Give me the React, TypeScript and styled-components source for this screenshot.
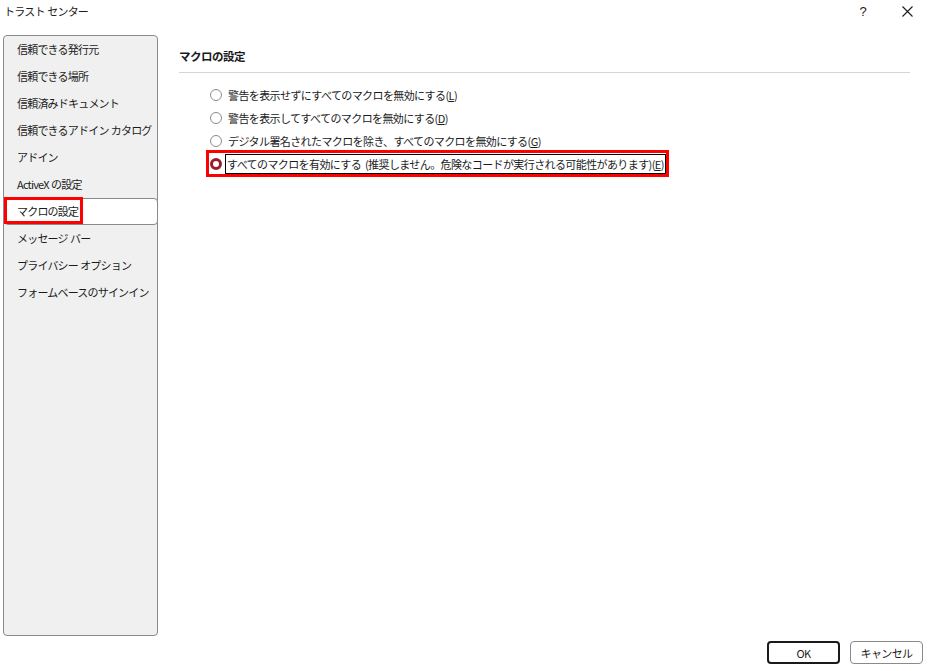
import styled, { createGlobalStyle } from 'styled-components';

const GlobalStyle = createGlobalStyle`
  html, body {
    margin: 0;
    padding: 0;
    background: #ffffff;
  }
  body {
    font-family: "Noto Sans CJK JP", "Noto Sans", sans-serif;
    font-size: 11px;
    color: #1b1b1b;
  }
`;

const Window = styled.div`
  display: flex;
  flex-direction: column;
  width: 929px;
  height: 671px;
  overflow: hidden;
`;

const TitleBar = styled.div`
  display: flex;
  align-items: flex-start;
  height: 35px;
  padding-left: 4px;
`;

const Title = styled.div`
  flex: 1;
  line-height: 22px;
  letter-spacing: -0.8px;
  word-spacing: 1px;
`;

const TitleButton = styled.div`
  width: 44px;
  height: 22px;
  display: flex;
  align-items: center;
  justify-content: center;
  font-family: "Liberation Sans", sans-serif;
  font-size: 13px;
`;

const Body = styled.div`
  flex: 1;
  display: flex;
  min-height: 0;
`;

const Sidebar = styled.ul`
  list-style: none;
  margin: 0 0 0 3px;
  padding: 0;
  width: 155px;
  background: #f0f0f0;
  border: 1px solid #8a8a8a;
  border-radius: 4px;
  box-sizing: border-box;
`;

interface IItemProps {
  selected?: boolean;
}
const Item = styled.li<IItemProps>`
  position: relative;
  height: 27px;
  display: flex;
  align-items: center;
  box-sizing: border-box;
  padding-left: ${(props) => (props.selected ? '12px' : '13px')};
  padding-bottom: 2px;
  letter-spacing: -0.8px;
  word-spacing: 0.5px;
  white-space: nowrap;
  background: ${(props) => (props.selected ? '#ffffff' : 'transparent')};
  border: ${(props) => (props.selected ? '1px solid #8a8a8a' : 'none')};
  border-radius: 4px;
  margin-right: ${(props) => (props.selected ? '-1px' : '0')};
`;

const ItemMark = styled.span`
  position: absolute;
  left: -1px;
  top: -2px;
  width: 79px;
  height: 27px;
  border: 3px solid #ff0000;
  box-sizing: border-box;
`;

const Content = styled.div`
  flex: 1;
  padding: 11px 19px 0 21px;
`;

const Heading = styled.h2`
  margin: 0;
  font-size: 11.5px;
  font-weight: 700;
  line-height: 20px;
  padding-bottom: 6px;
  border-bottom: 1px solid #d4d4d4;
  letter-spacing: -0.5px;
`;

const Options = styled.div`
  display: flex;
  flex-direction: column;
  align-items: flex-start;
  padding: 10px 0 0 29px;
`;

interface IRowProps {
  marked?: boolean;
}
const Row = styled.div<IRowProps>`
  display: flex;
  align-items: center;
  height: 23px;
  padding: 0 2px;
  gap: ${(props) => (props.marked ? '4px' : '6px')};
  outline: ${(props) => (props.marked ? '3px solid #ff0000' : 'none')};
  outline-offset: -1px;
`;

interface IRadioProps {
  checked?: boolean;
}
const Radio = styled.span<IRadioProps>`
  width: 12px;
  height: 12px;
  border-radius: 50%;
  box-sizing: border-box;
  background: #ffffff;
  border: ${(props) => (props.checked ? '3.5px solid #9b1c2c' : '1px solid #8c8c8c')};
`;

interface ILabelProps {
  focused?: boolean;
}
const Label = styled.span<ILabelProps>`
  letter-spacing: -0.6px;
  word-spacing: 2px;
  line-height: 18px;
  padding: ${(props) => (props.focused ? '0 1px' : '0')};
  outline: ${(props) => (props.focused ? '1px solid #000000' : 'none')};
  u {
    text-decoration: underline;
  }
`;

const Footer = styled.div`
  height: 35px;
  display: flex;
  justify-content: flex-end;
  align-items: flex-start;
  gap: 10px;
  padding: 5px 6px 0 0;
  box-sizing: border-box;
`;

interface IButtonProps {
  primary?: boolean;
}
const Button = styled.button<IButtonProps>`
  width: 73px;
  height: 23px;
  background: #ffffff;
  border: ${(props) => (props.primary ? '2px solid #1a1a1a' : '1px solid #8a8a8a')};
  border-radius: 4px;
  font-family: "Noto Sans CJK JP", "Noto Sans", sans-serif;
  font-size: 11px;
  color: #1b1b1b;
  letter-spacing: -0.6px;
  padding: 0;
`;

const sideItems = [
  '信頼できる発行元',
  '信頼できる場所',
  '信頼済みドキュメント',
  '信頼できるアドイン カタログ',
  'アドイン',
  'ActiveX の設定',
  'マクロの設定',
  'メッセージ バー',
  'プライバシー オプション',
  'フォームベースのサインイン',
];

const options = [
  { text: '警告を表示せずにすべてのマクロを無効にする', key: 'L' },
  { text: '警告を表示してすべてのマクロを無効にする', key: 'D' },
  { text: 'デジタル署名されたマクロを除き、すべてのマクロを無効にする', key: 'G' },
  {
    text: 'すべてのマクロを有効にする (推奨しません。危険なコードが実行される可能性があります)',
    key: 'E',
  },
];

function App() {
  return (
    <Window>
      <GlobalStyle />
      <TitleBar>
        <Title>トラスト センター</Title>
        <TitleButton>?</TitleButton>
        <TitleButton>
          <svg width="11" height="11" viewBox="0 0 11 11">
            <path d="M0.5 0.5 L10.5 10.5 M10.5 0.5 L0.5 10.5" stroke="#1b1b1b" strokeWidth="1.1" />
          </svg>
        </TitleButton>
      </TitleBar>
      <Body>
        <Sidebar>
          {sideItems.map((name) => (
            <Item key={name} selected={name === 'マクロの設定'}>
              {name === 'マクロの設定' && <ItemMark />}
              {name}
            </Item>
          ))}
        </Sidebar>
        <Content>
          <Heading>マクロの設定</Heading>
          <Options>
            {options.map((o, i) => {
              const on = i === 3;
              return (
                <Row key={o.key} marked={on}>
                  <Radio checked={on} />
                  <Label focused={on}>
                    {o.text}(<u>{o.key}</u>)
                  </Label>
                </Row>
              );
            })}
          </Options>
        </Content>
      </Body>
      <Footer>
        <Button primary>OK</Button>
        <Button>キャンセル</Button>
      </Footer>
    </Window>
  );
}

export default App;
